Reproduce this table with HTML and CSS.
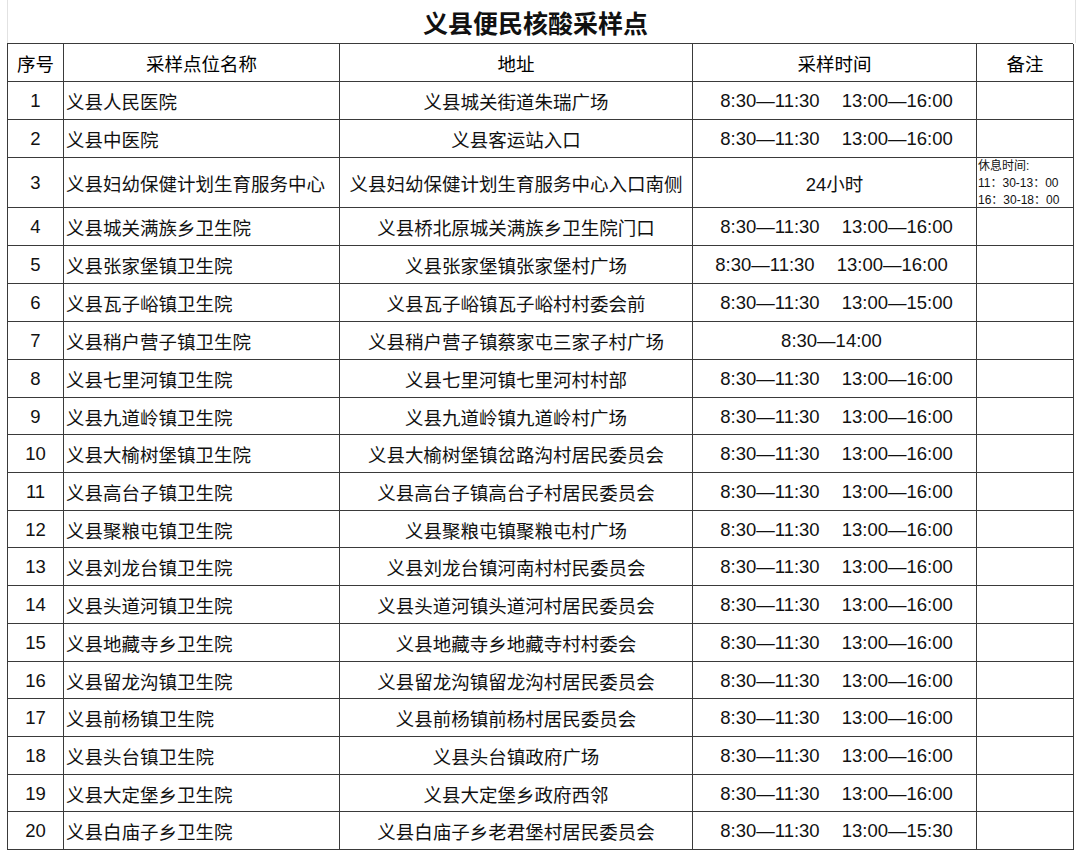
FILE: index.html
```html
<!DOCTYPE html>
<html lang="zh">
<head>
<meta charset="utf-8">
<title>义县便民核酸采样点</title>
<link rel="stylesheet" href="styles.css">
</head>
<body>
<div class="sheet">
  <div class="title">义县便民核酸采样点</div>
  <div class="table">
    <div class="row head">
      <div class="c no">序号</div><div class="c ctr">采样点位名称</div><div class="c ctr">地址</div><div class="c ctr">采样时间</div><div class="c ctr">备注</div>
    </div>
    <div class="row"><div class="c no">1</div><div class="c name">义县人民医院</div><div class="c ctr">义县城关街道朱瑞广场</div><div class="c time"><span>8:30—11:30</span><span>13:00—16:00</span></div><div class="c"></div></div>
    <div class="row"><div class="c no">2</div><div class="c name">义县中医院</div><div class="c ctr">义县客运站入口</div><div class="c time"><span>8:30—11:30</span><span>13:00—16:00</span></div><div class="c"></div></div>
    <div class="row tall"><div class="c no">3</div><div class="c name">义县妇幼保健计划生育服务中心</div><div class="c ctr">义县妇幼保健计划生育服务中心入口南侧</div><div class="c time single"><span>24小时</span></div><div class="c note">休息时间:<br>11：30-13：00<br>16：30-18：00</div></div>
    <div class="row"><div class="c no">4</div><div class="c name">义县城关满族乡卫生院</div><div class="c ctr">义县桥北原城关满族乡卫生院门口</div><div class="c time"><span>8:30—11:30</span><span>13:00—16:00</span></div><div class="c"></div></div>
    <div class="row"><div class="c no">5</div><div class="c name">义县张家堡镇卫生院</div><div class="c ctr">义县张家堡镇张家堡村广场</div><div class="c time shift"><span>8:30—11:30</span><span>13:00—16:00</span></div><div class="c"></div></div>
    <div class="row"><div class="c no">6</div><div class="c name">义县瓦子峪镇卫生院</div><div class="c ctr">义县瓦子峪镇瓦子峪村村委会前</div><div class="c time"><span>8:30—11:30</span><span>13:00—15:00</span></div><div class="c"></div></div>
    <div class="row"><div class="c no">7</div><div class="c name">义县稍户营子镇卫生院</div><div class="c ctr">义县稍户营子镇蔡家屯三家子村广场</div><div class="c time single left"><span>8:30—14:00</span></div><div class="c"></div></div>
    <div class="row"><div class="c no">8</div><div class="c name">义县七里河镇卫生院</div><div class="c ctr">义县七里河镇七里河村村部</div><div class="c time"><span>8:30—11:30</span><span>13:00—16:00</span></div><div class="c"></div></div>
    <div class="row short"><div class="c no">9</div><div class="c name">义县九道岭镇卫生院</div><div class="c ctr">义县九道岭镇九道岭村广场</div><div class="c time"><span>8:30—11:30</span><span>13:00—16:00</span></div><div class="c"></div></div>
    <div class="row"><div class="c no">10</div><div class="c name">义县大榆树堡镇卫生院</div><div class="c ctr">义县大榆树堡镇岔路沟村居民委员会</div><div class="c time"><span>8:30—11:30</span><span>13:00—16:00</span></div><div class="c"></div></div>
    <div class="row"><div class="c no">11</div><div class="c name">义县高台子镇卫生院</div><div class="c ctr">义县高台子镇高台子村居民委员会</div><div class="c time"><span>8:30—11:30</span><span>13:00—16:00</span></div><div class="c"></div></div>
    <div class="row short"><div class="c no">12</div><div class="c name">义县聚粮屯镇卫生院</div><div class="c ctr">义县聚粮屯镇聚粮屯村广场</div><div class="c time"><span>8:30—11:30</span><span>13:00—16:00</span></div><div class="c"></div></div>
    <div class="row"><div class="c no">13</div><div class="c name">义县刘龙台镇卫生院</div><div class="c ctr">义县刘龙台镇河南村村民委员会</div><div class="c time"><span>8:30—11:30</span><span>13:00—16:00</span></div><div class="c"></div></div>
    <div class="row"><div class="c no">14</div><div class="c name">义县头道河镇卫生院</div><div class="c ctr">义县头道河镇头道河村居民委员会</div><div class="c time"><span>8:30—11:30</span><span>13:00—16:00</span></div><div class="c"></div></div>
    <div class="row"><div class="c no">15</div><div class="c name">义县地藏寺乡卫生院</div><div class="c ctr">义县地藏寺乡地藏寺村村委会</div><div class="c time"><span>8:30—11:30</span><span>13:00—16:00</span></div><div class="c"></div></div>
    <div class="row short"><div class="c no">16</div><div class="c name">义县留龙沟镇卫生院</div><div class="c ctr">义县留龙沟镇留龙沟村居民委员会</div><div class="c time"><span>8:30—11:30</span><span>13:00—16:00</span></div><div class="c"></div></div>
    <div class="row"><div class="c no">17</div><div class="c name">义县前杨镇卫生院</div><div class="c ctr">义县前杨镇前杨村居民委员会</div><div class="c time"><span>8:30—11:30</span><span>13:00—16:00</span></div><div class="c"></div></div>
    <div class="row"><div class="c no">18</div><div class="c name">义县头台镇卫生院</div><div class="c ctr">义县头台镇政府广场</div><div class="c time"><span>8:30—11:30</span><span>13:00—16:00</span></div><div class="c"></div></div>
    <div class="row short"><div class="c no">19</div><div class="c name">义县大定堡乡卫生院</div><div class="c ctr">义县大定堡乡政府西邻</div><div class="c time"><span>8:30—11:30</span><span>13:00—16:00</span></div><div class="c"></div></div>
    <div class="row"><div class="c no">20</div><div class="c name">义县白庙子乡卫生院</div><div class="c ctr">义县白庙子乡老君堡村居民委员会</div><div class="c time"><span>8:30—11:30</span><span>13:00—15:30</span></div><div class="c"></div></div>
  </div>
</div>
</body>
</html>
```

FILE: styles.css
```css
html, body {
  margin: 0;
  padding: 0;
  background: #ffffff;
}

body {
  font-family: "Liberation Sans", "Noto Sans CJK SC", sans-serif;
  color: #111111;
  font-size: 18.5px;
}

.sheet {
  width: 1066px;
  margin-left: 7px;
}

.title {
  height: 43px;
  box-sizing: border-box;
  display: flex;
  align-items: center;
  justify-content: center;
  padding-right: 12px;
  font-size: 25px;
  font-weight: bold;
  border-left: 1px solid #e2e2e2;
  border-right: 1px solid #e2e2e2;
  margin-right: -3px;
}

.table {
  border-top: 1px solid #3a3a3a;
  border-left: 1px solid #3a3a3a;
}

.row {
  display: grid;
  grid-template-columns: 56px 276px 353px 284px 97px;
  height: 38px;
}

.row.short {
  height: 37px;
}

.row.tall {
  height: 50px;
}

.c {
  border-right: 1px solid #3a3a3a;
  border-bottom: 1px solid #3a3a3a;
  display: flex;
  align-items: center;
  white-space: nowrap;
  overflow: hidden;
  padding-top: 1px;
}

.head .c {
  font-weight: normal;
  color: #000000;
}

.no, .ctr {
  justify-content: center;
}

.name {
  padding-left: 2px;
}

.time {
  justify-content: center;
  gap: 22px;
  padding-left: 4px;
}

.time.single {
  padding-left: 0;
}

.time.single.left {
  padding-right: 6px;
}

.time.shift {
  padding-left: 0;
  padding-right: 6px;
}

.note {
  font-size: 12px;
  line-height: 17px;
  padding-left: 1px;
  display: block;
  padding-top: 0;
  color: #111111;
}
```
